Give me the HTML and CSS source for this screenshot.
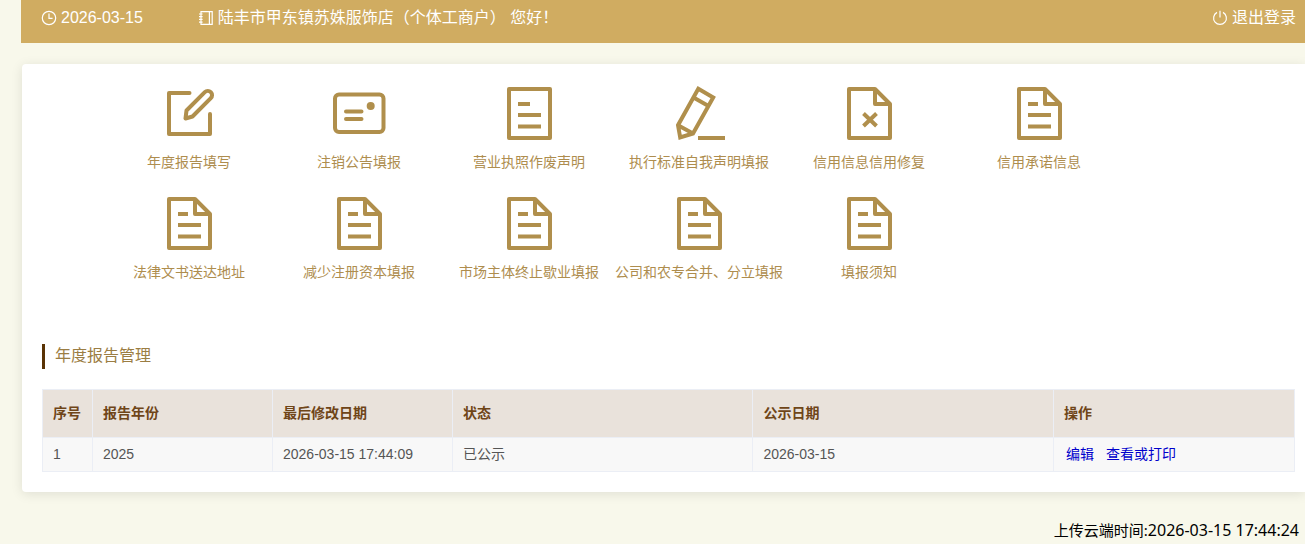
FILE: index.html
```html
<!DOCTYPE html>
<html lang="zh-CN">
<head>
    <meta charset="utf-8">
    <meta name="viewport" content="width=device-width, initial-scale=1">
    <title>年度报告管理</title>
    <link rel="stylesheet" href="styles.css">
</head>
<body>
    <!-- shared icons -->
    <svg class="sprite" aria-hidden="true">
        <symbol id="icon-file" viewBox="0 0 60 60">
            <path d="M10 6H36L51 21V55H10Z M36 6V21H51"/>
            <path d="M19 21H29 M19 32H42 M19 43.5H42"/>
        </symbol>
    </svg>

    <header class="topbar">
        <span class="topbar-item date">
            <svg class="icon-sm" viewBox="0 0 16 16"><circle cx="8" cy="8" r="6.7"/><path d="M8 3.6V8.4H11.6"/></svg>
            2026-03-15
        </span>
        <span class="topbar-item">
            <svg class="icon-sm" viewBox="0 0 16 16"><path d="M3 1.6H14.2V14.4H3Z M11.4 1.6V14.4 M1 4H4.6 M1 6.7H4.6 M1 9.4H4.6 M1 12.1H4.6"/></svg>
            陆丰市甲东镇苏姝服饰店（个体工商户） 您好！
        </span>
        <a class="topbar-item logout" href="#">
            <svg class="icon-sm" viewBox="0 0 16 16"><path d="M5 2.4A6.4 6.4 0 1 0 11 2.4 M8 .8V7.4"/></svg>
            退出登录
        </a>
    </header>

    <main class="card">
        <nav class="menu">
            <a class="menu-item" href="#">
                <svg class="icon" viewBox="0 0 60 60"><path stroke-linecap="round" d="M30.5 10H10V51H51V31"/><path d="M26.5 35.5L27.5 27.5L45.8 9.2A4.2 4.2 0 0 1 51.8 15.2L33.5 33.5Z"/></svg>
                年度报告填写
            </a>
            <a class="menu-item" href="#">
                <svg class="icon" viewBox="0 0 60 60"><rect x="6" y="11.5" width="48.5" height="37.5" rx="4"/><path stroke-linecap="round" d="M17 28.5H32.5 M17 36H32.5"/><circle class="dot" cx="41.7" cy="23" r="4"/></svg>
                注销公告填报
            </a>
            <a class="menu-item" href="#">
                <svg class="icon" viewBox="0 0 60 60"><path d="M10 6H51V55H10Z"/><path d="M19 21H31 M19 32H42 M19 43.5H42"/></svg>
                营业执照作废声明
            </a>
            <a class="menu-item" href="#">
                <svg class="icon" viewBox="0 0 60 60"><path stroke-linejoin="miter" d="M29.3 5.8L44.2 14.4L24 50.5L11.2 54.5L9 42.2Z M9 42.2L24 50.5 M24.5 14.5L39.5 23"/><path d="M29 55H56"/></svg>
                执行标准自我声明填报
            </a>
            <a class="menu-item" href="#">
                <svg class="icon" viewBox="0 0 60 60"><path d="M10 6H36L51 21V55H10Z M36 6V21H51"/><path d="M24.5 30.5L37.5 43 M37.5 30.5L24.5 43"/></svg>
                信用信息信用修复
            </a>
            <a class="menu-item" href="#">
                <svg class="icon"><use href="#icon-file"/></svg>
                信用承诺信息
            </a>
            <a class="menu-item" href="#">
                <svg class="icon"><use href="#icon-file"/></svg>
                法律文书送达地址
            </a>
            <a class="menu-item" href="#">
                <svg class="icon"><use href="#icon-file"/></svg>
                减少注册资本填报
            </a>
            <a class="menu-item" href="#">
                <svg class="icon"><use href="#icon-file"/></svg>
                市场主体终止歇业填报
            </a>
            <a class="menu-item" href="#">
                <svg class="icon"><use href="#icon-file"/></svg>
                公司和农专合并、分立填报
            </a>
            <a class="menu-item" href="#">
                <svg class="icon"><use href="#icon-file"/></svg>
                填报须知
            </a>
        </nav>

        <h2 class="section-title">年度报告管理</h2>

        <table class="report-table">
            <colgroup>
                <col class="col-index">
                <col class="col-year">
                <col class="col-modified">
                <col class="col-status">
                <col class="col-published">
                <col class="col-action">
            </colgroup>
            <thead>
                <tr>
                    <th>序号</th>
                    <th>报告年份</th>
                    <th>最后修改日期</th>
                    <th>状态</th>
                    <th>公示日期</th>
                    <th>操作</th>
                </tr>
            </thead>
            <tbody>
                <tr>
                    <td>1</td>
                    <td>2025</td>
                    <td>2026-03-15 17:44:09</td>
                    <td>已公示</td>
                    <td>2026-03-15</td>
                    <td><a href="#">编辑</a><a href="#">查看或打印</a></td>
                </tr>
            </tbody>
        </table>
    </main>

    <footer class="upload-time">上传云端时间:<time>2026-03-15 17:44:24</time></footer>
</body>
</html>
```

FILE: styles.css
```css
* {
    box-sizing: border-box;
}

body {
    margin: 0;
    padding-left: 21px;
    background: #f8f8eb;
    font-family: "Liberation Sans", Arial, "Noto Sans CJK SC", sans-serif;
    font-size: 14px;
    overflow-x: hidden;
}

.sprite {
    display: none;
}

/* top bar */
.topbar {
    display: flex;
    height: 43px;
    padding: 6px 9px 0 20px;
    background: #d0ac61;
    color: #fff;
    font-size: 16px;
    line-height: 24px;
}

.topbar-item {
    display: flex;
    align-items: center;
    height: 24px;
    gap: 4px;
    color: #fff;
    text-decoration: none;
    white-space: nowrap;
}

.date {
    margin-right: 55px;
}

.logout {
    margin-left: auto;
}

.icon-sm {
    width: 16px;
    height: 16px;
    fill: none;
    stroke: #fff;
    stroke-width: 1.2;
}

/* main card */
.card {
    margin: 21px 0 0 1px;
    padding: 19px 10px 20px 20px;
    background: #fff;
    border-radius: 4px 0 0 4px;
    box-shadow: 0 2px 12px rgba(0, 0, 0, 0.1);
}

.menu {
    display: flex;
    flex-wrap: wrap;
    padding: 0 62px;
}

.menu-item {
    display: flex;
    flex-direction: column;
    align-items: center;
    width: 170px;
    height: 110px;
    color: #ae8d4e;
    line-height: 20px;
    text-decoration: none;
    white-space: nowrap;
}

.icon {
    width: 60px;
    height: 60px;
    margin-bottom: 9px;
    fill: none;
    stroke: #b08f4c;
    stroke-width: 4;
    stroke-linejoin: round;
}

.icon .dot {
    fill: #b08f4c;
    stroke: none;
}

.section-title {
    margin: 41px 0 20px;
    padding: 0 0 1px 10px;
    border-left: 3px solid #5a3305;
    color: #9b7d43;
    font-size: 16px;
    font-weight: normal;
    line-height: 24px;
}

/* report table */
.report-table {
    width: 100%;
    table-layout: fixed;
    border-collapse: collapse;
    line-height: 20px;
}

.col-index {
    width: 50px;
}

.col-year,
.col-modified {
    width: 180px;
}

.col-status,
.col-published {
    width: 24%;
}

.report-table th,
.report-table td {
    padding: 0 10px 2px;
    border: 1px solid #ebeef5;
    text-align: left;
}

.report-table th {
    height: 48px;
    background: #e9e2db;
    color: #6f4518;
}

.report-table td {
    height: 34px;
    background: #f8f8f8;
    color: #555;
}

.report-table a {
    margin: 0 10px 0 2px;
    color: #00c;
    text-decoration: none;
}

.upload-time {
    padding: 26px 6px 0 0;
    color: #000;
    font-family: "Noto Sans", "Noto Sans CJK SC", sans-serif;
    font-size: 15px;
    line-height: 24px;
    text-align: right;
}

.upload-time time {
    font-size: 16px;
}
```
